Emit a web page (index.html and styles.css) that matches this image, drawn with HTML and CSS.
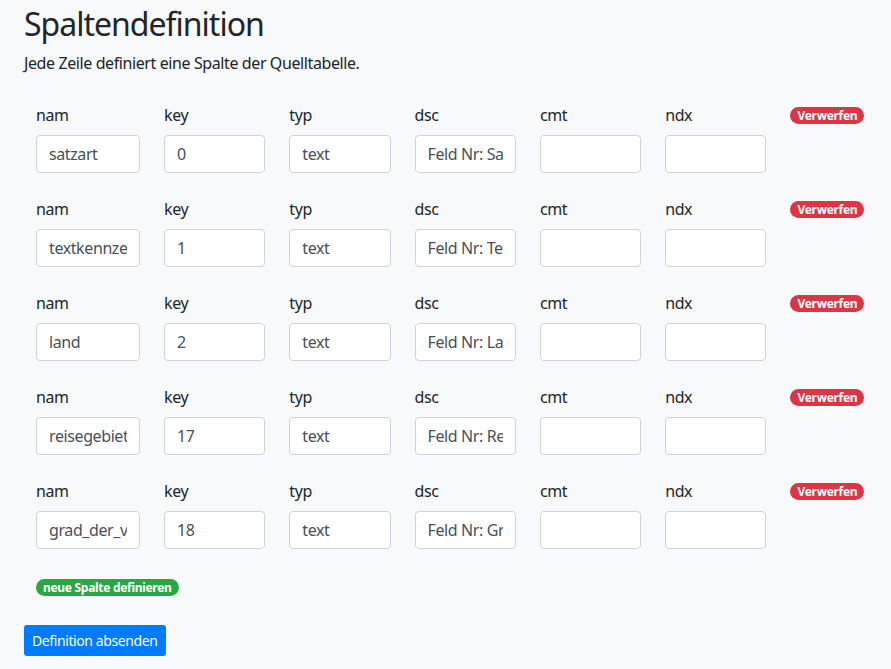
FILE: index.html
```html
<!DOCTYPE html>
<html lang="de">

<head>
    <meta charset="UTF-8">
    <meta name="viewport" content="width=device-width, initial-scale=1.0">
    <title>Spaltendefinition</title>
    <link rel="stylesheet" href="styles.css">
</head>

<body>
    <main class="container">
        <h1>Spaltendefinition</h1>
        <p class="lead-text">Jede Zeile definiert eine Spalte der Quelltabelle.</p>

        <form id="columnsForm">
            <div id="columns">
                <!-- rows are generated below -->
            </div>

            <div class="add-row">
                <span class="badge badge-green">neue Spalte definieren</span>
            </div>

            <button type="button" class="btn-submit">Definition absenden</button>
        </form>
    </main>

    <script>
        const fields = ['nam', 'key', 'typ', 'dsc', 'cmt', 'ndx'];

        const columns = [
            { nam: 'satzart', key: '0', typ: 'text', dsc: 'Feld Nr: Satzart', cmt: '', ndx: '' },
            { nam: 'textkennzeichen', key: '1', typ: 'text', dsc: 'Feld Nr: Textkennzeichen', cmt: '', ndx: '' },
            { nam: 'land', key: '2', typ: 'text', dsc: 'Feld Nr: Land', cmt: '', ndx: '' },
            { nam: 'reisegebiet', key: '17', typ: 'text', dsc: 'Feld Nr: Reisegebiet', cmt: '', ndx: '' },
            { nam: 'grad_der_verschmutzung', key: '18', typ: 'text', dsc: 'Feld Nr: Grad der Verschmutzung', cmt: '', ndx: '' }
        ];

        const container = document.getElementById('columns');

        columns.forEach(column => {
            const row = document.createElement('div');
            row.classList.add('column-row');

            fields.forEach(field => {
                const group = document.createElement('div');
                group.classList.add('form-group');
                group.innerHTML = `
                    <label>${field}</label>
                    <input type="text" class="form-control" value="${column[field]}">
                `;
                row.appendChild(group);
            });

            const drop = document.createElement('div');
            drop.classList.add('form-group');
            drop.innerHTML = '<span class="badge badge-red">Verwerfen</span>';
            row.appendChild(drop);

            container.appendChild(row);
        });
    </script>
</body>

</html>
```

FILE: styles.css
```css
body {
    font-family: "Noto Sans", "Open Sans", sans-serif;
    font-size: 16px;
    line-height: 1.5;
    letter-spacing: -0.4px;
    color: #212529;
    background-color: #f8f9fa;
    margin: 0;
    padding: 0;
}

.container {
    padding: 5px 24px 0;
}

h1 {
    font-size: 32px;
    font-weight: 400;
    line-height: 1.2;
    letter-spacing: -1px;
    margin: 0 0 8px 0;
}

.lead-text {
    margin: 0 0 20px 0;
}

.column-row {
    display: grid;
    grid-template-columns: 128px repeat(5, 125.3px) auto;
    padding-top: 8px;
}

.form-group {
    padding: 0 12px;
    margin-bottom: 16px;
}

.form-group label {
    display: block;
    height: 24px;
    margin-bottom: 8px;
}

.form-control {
    display: block;
    box-sizing: border-box;
    width: 100%;
    height: 38px;
    padding: 6px 12px;
    font-family: inherit;
    font-size: 16px;
    letter-spacing: -0.4px;
    color: #495057;
    background-color: #fff;
    border: 1px solid #ced4da;
    border-radius: 4px;
}

.badge {
    display: block;
    width: max-content;
    padding: 0 7px;
    font-size: 12px;
    font-weight: 700;
    line-height: 17px;
    letter-spacing: -0.3px;
    color: #fff;
    border-radius: 10rem;
    white-space: nowrap;
}

.badge-red {
    background-color: #dc3545;
    margin-top: 4px;
}

.badge-green {
    background-color: #28a745;
}

.add-row {
    padding: 14px 12px 0;
    height: 46px;
}

.btn-submit {
    background-color: #007bff;
    color: #fff;
    border: none;
    padding: 0 8px;
    height: 31px;
    border-radius: 3px;
    font-family: inherit;
    font-size: 14px;
    letter-spacing: -0.4px;
    cursor: pointer;
}
```
